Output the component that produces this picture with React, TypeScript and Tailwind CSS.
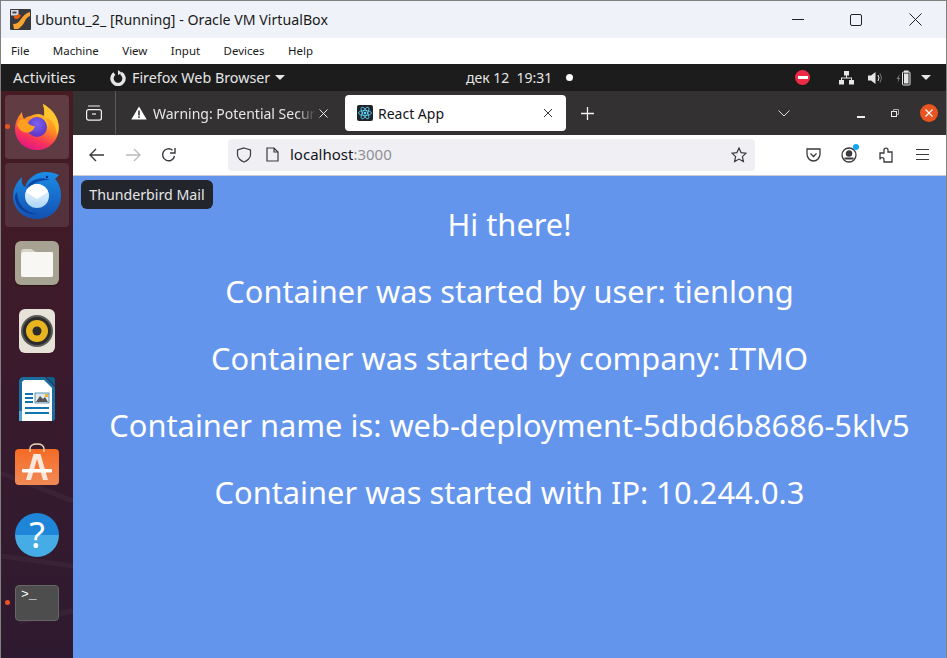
import React from "react";

const ub = "font-['Noto_Sans','Open_Sans',sans-serif]";

function VBoxIcon() {
  return (
    <svg width="21" height="21" viewBox="0 0 21 21" className="shrink-0">
      <rect width="21" height="21" rx="1" fill="#37393f" />
      <rect x="1" y="1" width="7.5" height="5.5" fill="#d9dbe0" />
      <rect x="2.5" y="2.5" width="4" height="2" fill="#44464c" />
      <path d="M4 9 C6 11 10 10 11 6 L8 5 C7 7 6 7 4 7Z" fill="#e8590c" />
      <path d="M20 3 L20 7 C17 8 16 10 15 12 C13 16 11 18 8 20 L4 20 L3 15 C7 15 9 13 11 10 C13 7 16 4 20 3Z" fill="#f9a331" />
    </svg>
  );
}

function FirefoxIcon({ s = 46 }: { s?: number }) {
  return (
    <svg width={s} height={s} viewBox="0 0 46 46">
      <defs>
        <linearGradient id="ffa" x1="0.75" y1="0.05" x2="0.35" y2="1">
          <stop offset="0" stopColor="#ffd02a" />
          <stop offset="0.45" stopColor="#ff8a22" />
          <stop offset="0.75" stopColor="#f8345a" />
          <stop offset="1" stopColor="#e31587" />
        </linearGradient>
        <radialGradient id="ffb" cx="0.5" cy="0.35" r="0.75">
          <stop offset="0" stopColor="#7a63f5" />
          <stop offset="1" stopColor="#5a2bb5" />
        </radialGradient>
      </defs>
      <path d="M23 46 C10 46 1 36 1 25 C1 19 3 14 8 8 C8 11 9 13 10 15 C12 13 15 12 17 12 C22 10 27 11 30 13 C31 8 30 4 29 0 C36 4 42 10 44 18 C46 26 44 34 38 40 C34 44 29 46 23 46Z" fill="url(#ffa)" />
      <path d="M29 0 C36 4 42 10 44 18 C45 22 45 27 43 31 C42 22 38 14 30 13 C31 8 30 4 29 0Z" fill="#ffc42e" />
      <circle cx="23" cy="23" r="10" fill="url(#ffb)" />
      <path d="M3 20 C5 27 11 30 16 28 C19 27 20 25 21 22 C17 22 14 20 13 17 C11 14 7 15 5 17Z" fill="#ff9f1f" />
      <path d="M15 13 C24 9 33 14 34 25 C36 19 33 11 25 10 C21 10 18 11 15 13Z" fill="#ffb52a" />
    </svg>
  );
}

function ThunderbirdIcon() {
  return (
    <svg width="49" height="47" viewBox="0 0 49 47">
      <defs>
        <linearGradient id="tba" x1="0.5" y1="0" x2="0.5" y2="1">
          <stop offset="0" stopColor="#1b8ee8" />
          <stop offset="1" stopColor="#1450b0" />
        </linearGradient>
        <linearGradient id="tbb" x1="0.5" y1="0" x2="0.5" y2="1">
          <stop offset="0" stopColor="#ffffff" />
          <stop offset="1" stopColor="#a9d5f7" />
        </linearGradient>
      </defs>
      <path d="M24 47 C10 47 0 37 0 24 C0 17 3 11 9 5 C8 10 9 13 12 15 C15 6 23 0 33 0 C38 0 42 1 46 3 L42 7 C46 11 48 17 48 24 C48 37 38 47 24 47Z" fill="url(#tba)" />
      <path d="M4 20 C4 32 12 41 25 42 C14 44 2 36 2 24Z" fill="#0f3f9e" />
      <path d="M13 16 C18 7 28 4 37 8 C30 8 22 9 17 15Z" fill="#0d4aa8" />
      <circle cx="34" cy="5" r="1.2" fill="#0b2f7a" />
      <circle cx="24" cy="24" r="12" fill="url(#tbb)" />
      <path d="M13 20 C15 15 20 12 24 12 C28 12 33 15 35 20 L24 27Z" fill="#fff" />
      <path d="M12.5 21 L24 28.5 L35.5 21" fill="none" stroke="#cfe6fa" strokeWidth="1" />
    </svg>
  );
}

function FilesIcon() {
  return (
    <div className="flex h-[44px] w-[44px] items-center justify-center rounded-md bg-[#a8a293] shadow-[0_1px_1px_rgba(0,0,0,0.4)]">
      <svg width="32" height="28" viewBox="0 0 32 28">
        <path d="M0 3 Q0 0 3 0 H10 L15 3 H32 V26 Q32 28 30 28 H2 Q0 28 0 26Z" fill="#d9d5cb" />
        <path d="M0 7 Q0 3 3 3 H30 Q32 3 32 5 V26 Q32 28 30 28 H2 Q0 28 0 26Z" fill="#f8f7f4" />
      </svg>
    </div>
  );
}

function SpeakerIcon() {
  return (
    <div className="flex h-[44px] w-[36px] items-center justify-center rounded-md bg-[#e6e2d8]">
      <svg width="32" height="32" viewBox="0 0 32 32">
        <circle cx="16" cy="16" r="16" fill="#5a5a58" />
        <circle cx="16" cy="16" r="14" fill="#2b2b2b" />
        <circle cx="16" cy="16" r="11" fill="#e8b520" />
        <circle cx="16" cy="16" r="4.5" fill="#2b2b2b" />
      </svg>
    </div>
  );
}

function WriterIcon() {
  return (
    <svg width="36" height="44" viewBox="0 0 36 44">
      <path d="M5 0 H26 L36 10 V41 Q36 44 33 44 H3 Q0 44 0 41 V5 Q0 0 5 0Z" fill="#1a6e9e" />
      <path d="M5 3 H25 L33 11 V44 H3 V5Z" fill="#fff" />
      <path d="M27 0 H33 Q36 0 36 3 V9Z" fill="#0f5f8c" />
      <rect x="6" y="16" width="8" height="2" fill="#0f74b0" />
      <rect x="6" y="20" width="8" height="2" fill="#0f74b0" />
      <rect x="6" y="24" width="8" height="2" fill="#0f74b0" />
      <rect x="6" y="30" width="24" height="2" fill="#0f74b0" />
      <rect x="6" y="35" width="24" height="2" fill="#0f74b0" />
      <rect x="16" y="16" width="14" height="10" fill="#dfe8ee" stroke="#1a6e9e" strokeWidth="0.7" />
      <path d="M17 25 L21 19 L24 22 L26 20 L29 25Z" fill="#555" />
      <rect x="26" y="17" width="3" height="3" fill="#f0b429" />
      <rect x="0" y="34" width="3" height="10" fill="#52a6cf" />
    </svg>
  );
}

function SoftwareIcon() {
  return (
    <div className="relative mt-[-1px] flex h-[36px] w-[44px] items-center justify-center rounded-[4px] bg-linear-to-b from-[#f56a22] to-[#f08a55]">
      <svg className="absolute -top-[6px] left-[14px]" width="16" height="9" viewBox="0 0 16 9">
        <path d="M1 9 V6 Q1 1 8 1 Q15 1 15 6 V9" fill="none" stroke="#ecd9b8" strokeWidth="1.4" />
      </svg>
      <svg width="30" height="30" viewBox="0 0 30 30">
        <path d="M11.5 2 H18.5 L26 28 H21 L15 7 L9 28 H4Z" fill="#fbe6da" />
        <rect x="0" y="17" width="30" height="3.5" rx="1" fill="#fff" />
      </svg>
    </div>
  );
}

function HelpIcon() {
  return (
    <div className="relative flex h-[44px] w-[44px] items-center justify-center rounded-full bg-linear-to-b from-[#1e85d8] from-50% to-[#45ace5] to-50%">
      <span className={`text-[36px] leading-[44px] text-white ${ub}`}>?</span>
    </div>
  );
}

function TerminalIcon() {
  return (
    <div className="mt-[-1px] h-[36px] w-[44px] rounded-[4px] border border-[#666] bg-[#4d4d4d] px-[5px] pt-[2px]">
      <div className="font-['Liberation_Mono',monospace] text-[13px] leading-[14px] text-white">{">_"}</div>
    </div>
  );
}

function DockItem({ children, tint, dot }: { children: React.ReactNode; tint?: string; dot?: boolean }) {
  return (
    <div className={`relative flex h-[64px] w-[64px] items-center justify-center rounded-[4px] ${tint ?? ""}`}>
      {dot && <div className="absolute left-[0px] top-[29px] h-[5px] w-[5px] rounded-full bg-[#e95420]" />}
      {children}
    </div>
  );
}

function Dock() {
  return (
    <aside className="relative flex w-[72px] shrink-0 flex-col items-center gap-[4px] bg-linear-to-b from-[#461b22] via-[#3a1a2c] to-[#2e1a30] pt-[4px]">
      <svg className="absolute left-0 top-[360px]" width="72" height="207" viewBox="0 0 72 207" fill="none" stroke="#ffffff" strokeOpacity="0.035">
        <path d="M0 22 L72 50" strokeWidth="5" />
        <path d="M0 105 L72 115" strokeWidth="5" />
        <path d="M18 170 L72 160" strokeWidth="6" />
      </svg>
      <DockItem tint="bg-white/15" dot><FirefoxIcon /></DockItem>
      <DockItem tint="bg-white/10"><ThunderbirdIcon /></DockItem>
      <DockItem><FilesIcon /></DockItem>
      <DockItem><SpeakerIcon /></DockItem>
      <DockItem><WriterIcon /></DockItem>
      <DockItem><SoftwareIcon /></DockItem>
      <DockItem><HelpIcon /></DockItem>
      <DockItem dot><TerminalIcon /></DockItem>
    </aside>
  );
}

function GnomeBar() {
  return (
    <div className={`relative flex h-[27px] items-center bg-[#1c1c1c] text-[14.3px] text-[#e6e6e6] ${ub}`}>
      <span className="ml-[12px] w-[62px] text-[15px]">Activities</span>
      <svg className="ml-[35px]" width="16" height="16" viewBox="0 0 16 16">
        <circle cx="8" cy="8.5" r="6" fill="none" stroke="#e6e6e6" strokeWidth="3.4" strokeDasharray="30 8" transform="rotate(-60 8 8.5)" />
        <path d="M8 0 L12 3 L8 5Z" fill="#e6e6e6" />
      </svg>
      <span className="ml-[6px] w-[138px] whitespace-nowrap">Firefox Web Browser</span>
      <div className="ml-[5px] h-0 w-0 border-x-[5px] border-t-[5px] border-x-transparent border-t-[#e6e6e6]" />
      <span className="ml-[181px] w-[86px] whitespace-nowrap text-[14px]">дек 12&nbsp;&nbsp;19:31</span>
      <div className="ml-[14px] h-[7px] w-[7px] rounded-full bg-white" />
      <div className="ml-[222px] flex h-[15px] w-[15px] items-center justify-center rounded-full bg-[#ed2b44]">
        <div className="h-[2.5px] w-[10px] bg-white" />
      </div>
      <svg className="ml-[29px]" width="15" height="14" viewBox="0 0 15 14" fill="#e6e6e6">
        <rect x="5" y="0" width="5" height="4.5" />
        <rect x="0" y="9" width="5" height="4.5" />
        <rect x="10" y="9" width="5" height="4.5" />
        <path d="M7 4 H8 V6.5 H13 V9 H12 V7.5 H3 V9 H2 V6.5 H7Z" />
      </svg>
      <svg className="ml-[14px]" width="15" height="14" viewBox="0 0 15 14">
        <path d="M0 4.5 H3 L7.5 1 V13 L3 9.5 H0Z" fill="#e6e6e6" />
        <path d="M10 4 Q12 7 10 10" fill="none" stroke="#e6e6e6" strokeWidth="1" />
        <path d="M12 2.5 Q15 7 12 11.5" fill="none" stroke="#777" strokeWidth="1" />
      </svg>
      <svg className="ml-[13px]" width="15" height="16" viewBox="0 0 15 16">
        <path d="M4 4 L0.5 9 H2.5 L1.5 13 L4 8 H2.5Z" fill="#888" />
        <rect x="6.5" y="2" width="7.5" height="13" rx="1" fill="none" stroke="#e6e6e6" />
        <rect x="8" y="0.5" width="4.5" height="2" fill="#e6e6e6" />
        <rect x="8" y="3.5" width="4.5" height="10" fill="#e6e6e6" />
      </svg>
      <div className="ml-[10px] h-0 w-0 border-x-[5px] border-t-[5px] border-x-transparent border-t-[#e6e6e6]" />
    </div>
  );
}

function TabBar() {
  return (
    <div className={`flex h-[44px] items-center bg-[#333132] ${ub}`}>
      <div className="flex h-full w-[43px] items-center justify-center border-r border-[#5a5a5a] my-[3px]">
        <svg width="16" height="16" viewBox="0 0 16 16" fill="none" stroke="#f2f2f2" strokeWidth="1.2">
          <rect x="0.6" y="4.6" width="14.8" height="10.5" rx="2" />
          <path d="M2.5 1 H13.5" strokeLinecap="round" />
          <path d="M6 9 H10" />
        </svg>
      </div>
      <div className="flex w-[229px] shrink-0 items-center pl-[15px] text-[14px] text-[#e6e6e6]">
        <svg width="16" height="14" viewBox="0 0 16 14">
          <path d="M8 0.5 L15.7 13.5 H0.3Z" fill="#fff" />
          <rect x="7.2" y="4.5" width="1.6" height="5" fill="#333" />
          <rect x="7.2" y="10.3" width="1.6" height="1.6" fill="#333" />
        </svg>
        <span className="ml-[6px] w-[163px] overflow-hidden whitespace-nowrap [mask-image:linear-gradient(to_right,black_88%,transparent)]">Warning: Potential Security Risk</span>
        <svg className="ml-[3px]" width="9" height="9" viewBox="0 0 9 9" stroke="#e6e6e6" strokeWidth="1"><path d="M0.5 0.5 L8.5 8.5 M8.5 0.5 L0.5 8.5" /></svg>
      </div>
      <div className="flex h-[36px] w-[221px] shrink-0 items-center rounded-[4px] bg-white pl-[12px] text-[14px] text-[#15141a]">
        <svg width="16" height="16" viewBox="0 0 16 16">
          <rect width="16" height="16" rx="2" fill="#20232a" />
          <g fill="none" stroke="#61dafb" strokeWidth="0.8">
            <ellipse cx="8" cy="8" rx="6.5" ry="2.5" />
            <ellipse cx="8" cy="8" rx="6.5" ry="2.5" transform="rotate(60 8 8)" />
            <ellipse cx="8" cy="8" rx="6.5" ry="2.5" transform="rotate(120 8 8)" />
          </g>
          <circle cx="8" cy="8" r="1.3" fill="#61dafb" />
        </svg>
        <span className="ml-[5px] w-[165px] whitespace-nowrap">React App</span>
        <svg width="10" height="10" viewBox="0 0 10 10" stroke="#333" strokeWidth="1"><path d="M1 1 L9 9 M9 1 L1 9" /></svg>
      </div>
      <svg className="ml-[15px]" width="13" height="13" viewBox="0 0 13 13" stroke="#f2f2f2" strokeWidth="1.3"><path d="M6.5 0 V13 M0 6.5 H13" /></svg>
      <svg className="ml-[184px]" width="12" height="7" viewBox="0 0 12 7" fill="none" stroke="#ddd" strokeWidth="1"><path d="M0.5 0.5 L6 6 L11.5 0.5" /></svg>
      <div className="ml-[67px] mt-[8px] h-[1.5px] w-[8px] bg-[#eee]" />
      <svg className="ml-[26px]" width="8" height="8" viewBox="0 0 8 8" fill="none" stroke="#eee" strokeWidth="1">
        <rect x="0.5" y="2.5" width="5" height="5" />
        <path d="M2.5 2.5 V0.5 H7.5 V5.5 H5.5" stroke="#aaa" />
      </svg>
      <div className="ml-[21px] flex h-[18px] w-[18px] items-center justify-center rounded-full bg-[#e95420]">
        <svg width="8" height="8" viewBox="0 0 8 8" stroke="#fff" strokeWidth="1.2"><path d="M0.5 0.5 L7.5 7.5 M7.5 0.5 L0.5 7.5" /></svg>
      </div>
    </div>
  );
}

function NavBar() {
  const c = "#3a3a3f";
  return (
    <div className={`flex h-[41px] items-center border-b border-[#c9ccd3] bg-white pb-[1px] ${ub}`}>
      <svg className="ml-[16px]" width="16" height="14" viewBox="0 0 16 14" fill="none" stroke={c} strokeWidth="1.4"><path d="M15 7 H1 M7 1 L1 7 L7 13" /></svg>
      <svg className="ml-[20px]" width="16" height="14" viewBox="0 0 16 14" fill="none" stroke="#bcbcbc" strokeWidth="1.4"><path d="M1 7 H15 M9 1 L15 7 L9 13" /></svg>
      <svg className="ml-[20px]" width="16" height="16" viewBox="0 0 16 16" fill="none" stroke={c} strokeWidth="1.4">
        <path d="M13.5 9 A6 6 0 1 1 11.5 3.2" />
        <path d="M14 1 V6 H9" />
      </svg>
      <div className="ml-[51px] flex h-[32px] w-[527px] items-center rounded-[4px] bg-[#f0f0f4] pl-[8px] text-[15px]">
        <svg width="16" height="16" viewBox="0 0 16 16" fill="none" stroke={c} strokeWidth="1.2"><path d="M8 1 L14.5 3 V8 C14.5 11 11 14 8 15 C5 14 1.5 11 1.5 8 V3Z" /></svg>
        <svg className="ml-[14px]" width="13" height="15" viewBox="0 0 13 15" fill="none" stroke={c} strokeWidth="1.2"><path d="M1 1 H8 L12 5 V14 H1Z M8 1 V5 H12" /></svg>
        <span className="ml-[11px] text-[#15141a]">localhost<span className="text-[#8f8f94]">:3000</span></span>
        <svg className="ml-auto mr-[8px]" width="16" height="16" viewBox="0 0 16 16" fill="none" stroke={c} strokeWidth="1.2"><path d="M8 1 L10.1 5.6 L15 6.2 L11.4 9.6 L12.4 14.6 L8 12.1 L3.6 14.6 L4.6 9.6 L1 6.2 L5.9 5.6Z" /></svg>
      </div>
      <svg className="ml-[51px]" width="15" height="14" viewBox="0 0 15 14" fill="none" stroke={c} strokeWidth="1.3"><path d="M1 1 H14 V6 C14 10 11 13 7.5 13 C4 13 1 10 1 6Z M4.5 5.5 L7.5 8.5 L10.5 5.5" /></svg>
      <div className="relative ml-[20px] h-[16px] w-[16px]">
        <svg width="16" height="16" viewBox="0 0 16 16" fill="none" stroke={c} strokeWidth="1.3">
          <circle cx="8" cy="8" r="7" />
          <circle cx="8" cy="6.5" r="2.6" fill={c} />
          <path d="M3.5 11.5 H12.5" strokeWidth="2" />
        </svg>
        <div className="absolute -right-[2px] -top-[3px] h-[6px] w-[6px] rounded-full bg-[#0ea5f5]" />
      </div>
      <svg className="ml-[22px]" width="15" height="16" viewBox="0 0 15 16" fill="none" stroke={c} strokeWidth="1.3"><path d="M1 6 H5 V3 C5 0.5 9 0.5 9 3 V5 H13 V15 H5 V12.5 C5 10 1 10 1 12.5Z" /></svg>
      <svg className="ml-[22px]" width="13" height="11" viewBox="0 0 13 11" stroke={c} strokeWidth="1"><path d="M0 0.5 H13 M0 5.5 H13 M0 10.5 H13" /></svg>
    </div>
  );
}

const lines = [
  "Hi there!",
  "Container was started by user: tienlong",
  "Container was started by company: ITMO",
  "Container name is: web-deployment-5dbd6b8686-5klv5",
  "Container was started with IP: 10.244.0.3",
];

export default function App() {
  return (
    <div className="flex h-[658px] w-[947px] flex-col overflow-hidden border-x border-t border-[#808080] bg-white font-['Noto_Sans',sans-serif]">
      <div className="flex h-[37px] shrink-0 items-center bg-[#eff2f9] pl-[9px] text-[14.2px] text-[#1a1a1a]">
        <VBoxIcon />
        <span className="ml-[4px] whitespace-nowrap">Ubuntu_2_ [Running] - Oracle VM VirtualBox</span>
        <div className="ml-auto mr-[24px] flex items-center">
          <div className="h-[1px] w-[12px] bg-[#222]" />
          <div className="ml-[46px] h-[12px] w-[12px] rounded-[2px] border border-[#222]" />
          <svg className="ml-[47px]" width="13" height="13" viewBox="0 0 13 13" stroke="#222" strokeWidth="1"><path d="M0.5 0.5 L12.5 12.5 M12.5 0.5 L0.5 12.5" /></svg>
        </div>
      </div>
      <div className="flex h-[26px] shrink-0 items-center gap-[23.4px] bg-white pl-[10px] text-[11.5px] text-[#1a1a1a]">
        <span>File</span><span>Machine</span><span>View</span><span>Input</span><span>Devices</span><span>Help</span>
      </div>
      <GnomeBar />
      <div className="relative flex min-h-0 flex-1">
        <Dock />
        <div className="flex min-w-0 flex-1 flex-col">
          <TabBar />
          <NavBar />
          <main className="flex flex-1 flex-col items-center gap-[32px] bg-[#6495ed] pt-[31px] text-[30.8px] leading-[35px] text-white">
            {lines.map((l) => (
              <div key={l} className="whitespace-nowrap">{l}</div>
            ))}
          </main>
        </div>
        <div className={`absolute left-[80px] top-[89px] flex h-[29px] w-[132px] items-center justify-center rounded-[6px] bg-[#22252c] text-[14.2px] text-[#e6e6e6] ${ub}`}>
          Thunderbird Mail
        </div>
      </div>
    </div>
  );
}
